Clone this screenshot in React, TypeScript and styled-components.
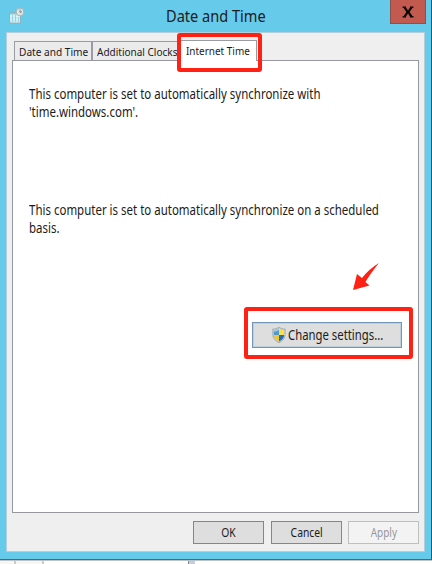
import React from 'react';
import styled, { createGlobalStyle } from 'styled-components';

const GlobalStyle = createGlobalStyle`
  * { box-sizing: border-box; }
  body { margin: 0; overflow: hidden; background: #fff; }
`;

const Screen = styled.div`
  width: 432px;
  height: 564px;
  display: flex;
  flex-direction: column;
  overflow: hidden;
  font-family: 'Noto Sans', 'Open Sans', sans-serif;
  color: #1b1b1b;
`;

const Window = styled.div`
  position: relative;
  height: 560px;
  flex: none;
  display: flex;
  flex-direction: column;
  background: #66caea;
  border-right: 1px solid #2b5968;
  border-bottom: 1px solid #426f7d;
  padding: 0 6px 7px 6px;
`;

const TitleBar = styled.header`
  height: 32px;
  flex: none;
  display: flex;
  align-items: flex-start;
  padding-left: 2px;
`;

const Title = styled.h1`
  margin: 3px 0 0 140px;
  font-size: 16px;
  line-height: 26px;
  font-weight: 400;
  width: 100px;
  white-space: nowrap;
`;

const CloseButton = styled.button`
  width: 36px;
  height: 24px;
  margin: 0 -1px 0 auto;
  display: flex;
  align-items: center;
  justify-content: center;
  padding: 0;
  background: #c35a50;
  border: 1px solid #88514f;
  border-top: 0;
`;

const Client = styled.main`
  flex: 1;
  display: flex;
  flex-direction: column;
  background: #efefef;
  border: 1px solid #b3ced8;
  padding: 8px 5px 0;
`;

const Tabs = styled.nav`
  display: flex;
  height: 19px;
  padding-left: 2px;
  flex: none;
`;

const Tab = styled.div<{ $width: number; $active?: boolean }>`
  position: relative;
  width: ${p => p.$width}px;
  height: ${p => (p.$active ? 21 : 19)}px;
  margin-top: ${p => (p.$active ? -1 : 0)}px;
  padding-left: ${p => (p.$active ? 7 : 4)}px;
  background: ${p => (p.$active ? '#fff' : '#ebebeb')};
  border: 1px solid #9b9ba3;
  border-bottom: 0;
  border-left-width: ${p => (p.$active ? 0 : 1)}px;
  font-size: 11px;
  line-height: ${p => (p.$active ? 19 : 20)}px;
  z-index: ${p => (p.$active ? 1 : 0)};
`;

const Panel = styled.section`
  height: 453px;
  background: #fff;
  border: 1px solid #9797a0;
  padding: 24px 16px;
  display: flex;
  flex-direction: column;
`;

const Message = styled.p<{ $gap: number }>`
  margin: 0 0 ${p => p.$gap}px;
  height: 36px;
  font-size: 13px;
  line-height: 18px;
`;

const Fit = styled.span<{ $x: number; $y?: number; $center?: boolean }>`
  display: inline-block;
  white-space: nowrap;
  transform: scale(${p => p.$x}, ${p => p.$y ?? 1});
  transform-origin: ${p => (p.$center ? 'center' : 'left center')};
`;

const SettingsButton = styled.button`
  align-self: flex-end;
  width: 150px;
  height: 26px;
  padding: 0 0 0 18px;
  display: flex;
  align-items: center;
  gap: 1px;
  background: #dedede;
  border: 1px solid #7096ba;
  box-shadow: inset 0 0 0 1px #bed0dd;
  font: 13px/22px 'Noto Sans', sans-serif;
  color: #1b1b1b;
  svg { flex: none; }
`;

const Footer = styled.footer`
  display: flex;
  justify-content: flex-end;
  gap: 7px;
  margin-top: 8px;
`;

const DialogButton = styled.button`
  width: 71px;
  height: 23px;
  padding: 0;
  background: #dedede;
  border: 1px solid #868686;
  font: 12px/20px 'Noto Sans', sans-serif;
  color: #1b1b1b;
  &:disabled {
    margin-left: -1px;
    background: #f3f3f3;
    border-color: #bfbfbf;
    color: #969696;
  }
`;

const Highlight = styled.div<{ $x: number; $y: number; $w: number; $h: number }>`
  position: absolute;
  left: ${p => p.$x}px;
  top: ${p => p.$y}px;
  width: ${p => p.$w}px;
  height: ${p => p.$h}px;
  border: 4px solid #ff2114;
  border-radius: 3px;
  z-index: 2;
  pointer-events: none;
`;

const Arrow = styled.svg`
  position: absolute;
  left: 350px;
  top: 260px;
`;

const Backdrop = styled.div`
  height: 4px;
  display: grid;
  grid-template-columns: 14px 2px 26px 2px 144px 1px 6px 1fr;
  border-top: 1px solid #c0c2c4;
  span { background: #f6f6f6; }
  span:nth-child(2), span:nth-child(4) { background: #ccc; }
  span:nth-child(5), span:nth-child(8) { background: #fff; }
  span:nth-child(6) { background: #858b98; }
  span:nth-child(7) { background: #c3cfdf; }
`;

const ClockIcon = () => (
  <svg width="18" height="26" viewBox="0 0 18 26">
    <path d="M1.5 12.5h11v10.5h-11z" fill="#d9f3f7" stroke="#85aab3" strokeWidth=".8" />
    <path d="M2 13h7v1.5H2z" fill="#83cbd8" />
    <path d="M4.5 15v7M7.5 15v7M10.5 17v5" stroke="#7dcbdc" strokeWidth=".8" />
    <path d="M2 18h10M2 21h10" stroke="#a9dce5" strokeWidth=".6" />
    <circle cx="12" cy="12" r="3.9" fill="#dce5e4" stroke="#a5b5b7" />
    <path d="M12 9.5v3l2-1" fill="none" stroke="#6c8589" strokeWidth=".9" />
  </svg>
);

const ShieldIcon = () => (
  <svg width="16" height="18" viewBox="0 0 15 18">
    <path d="M7.5 1C5.8 2.5 3.8 3 1.3 3v5.5c0 4 2.6 6.4 6.2 8.3 3.6-1.9 6.2-4.3 6.2-8.3V3C11.2 3 9.2 2.5 7.5 1z" fill="#c5cbd0" stroke="#9aa6ad" strokeWidth=".8" />
    <path d="M7.5 2.5C6 3.7 4.2 4.1 2.4 4.1V9h5.1z" fill="#4b9bd0" />
    <path d="M7.5 2.5C6 3.7 4.2 4.1 2.4 4.1v1.5C4.8 5.6 6.5 5 7.5 4z" fill="#a7cbdc" />
    <path d="M7.5 2.5C9 3.7 10.8 4.1 12.6 4.1V9H7.5z" fill="#ffdf47" />
    <path d="M2.4 9h5.1v6.6C4.7 14 2.4 12.2 2.4 9z" fill="#f4c72d" />
    <path d="M7.5 9h5.1c0 3.2-2.3 5-5.1 6.6z" fill="#236eb8" />
  </svg>
);

export default function App() {
  return (
    <Screen>
      <GlobalStyle />
      <Window>
        <TitleBar>
          <ClockIcon />
          <Title><Fit $x={0.91}>Date and Time</Fit></Title>
          <CloseButton aria-label="Close">
            <svg width="12" height="14" viewBox="0 0 12 14">
              <path d="M.5 1.5H4v1l2 3 2-3v-1h3.5v1.2h-1L7.6 7l3 4.3h1v1.2H8v-1L6 8.6l-2 2.9v1H.5v-1.2h1L4.4 7l-3-4.3H.5z" fill="#080606" />
            </svg>
          </CloseButton>
        </TitleBar>
        <Client>
          <Tabs>
            <Tab $width={78}><Fit $x={0.92}>Date and Time</Fit></Tab>
            <Tab $width={87}><Fit $x={0.91}>Additional Clocks</Fit></Tab>
            <Tab $width={78} $active><Fit $x={0.905}>Internet Time</Fit></Tab>
          </Tabs>
          <Panel>
            <Message $gap={80}>
              <Fit $x={0.883} $y={1.07}>This computer is set to automatically synchronize with</Fit><br />
              <Fit $x={0.883} $y={1.07}>'time.windows.com'.</Fit>
            </Message>
            <Message $gap={85}>
              <Fit $x={0.883} $y={1.07}>This computer is set to automatically synchronize on a scheduled</Fit><br />
              <Fit $x={0.883} $y={1.07}>basis.</Fit>
            </Message>
            <SettingsButton><ShieldIcon /><Fit $x={0.872} $y={1.07}>Change settings...</Fit></SettingsButton>
          </Panel>
          <Footer>
            <DialogButton><Fit $center $x={0.86}>OK</Fit></DialogButton>
            <DialogButton><Fit $center $x={0.86}>Cancel</Fit></DialogButton>
            <DialogButton disabled><Fit $center $x={0.83}>Apply</Fit></DialogButton>
          </Footer>
        </Client>
        <Highlight $x={177} $y={33} $w={85} $h={39} />
        <Highlight $x={244} $y={307} $w={169} $h={52} />
        <Arrow width="32" height="34" viewBox="0 0 32 34">
          <path d="M29 3Q19 9 12 18L7 14 3 30l16.5-4.5-4-3.5Q20 14 29 3z" fill="#ff2114" />
        </Arrow>
      </Window>
      <Backdrop>{Array.from({ length: 8 }, (_, i) => <span key={i} />)}</Backdrop>
    </Screen>
  );
}
